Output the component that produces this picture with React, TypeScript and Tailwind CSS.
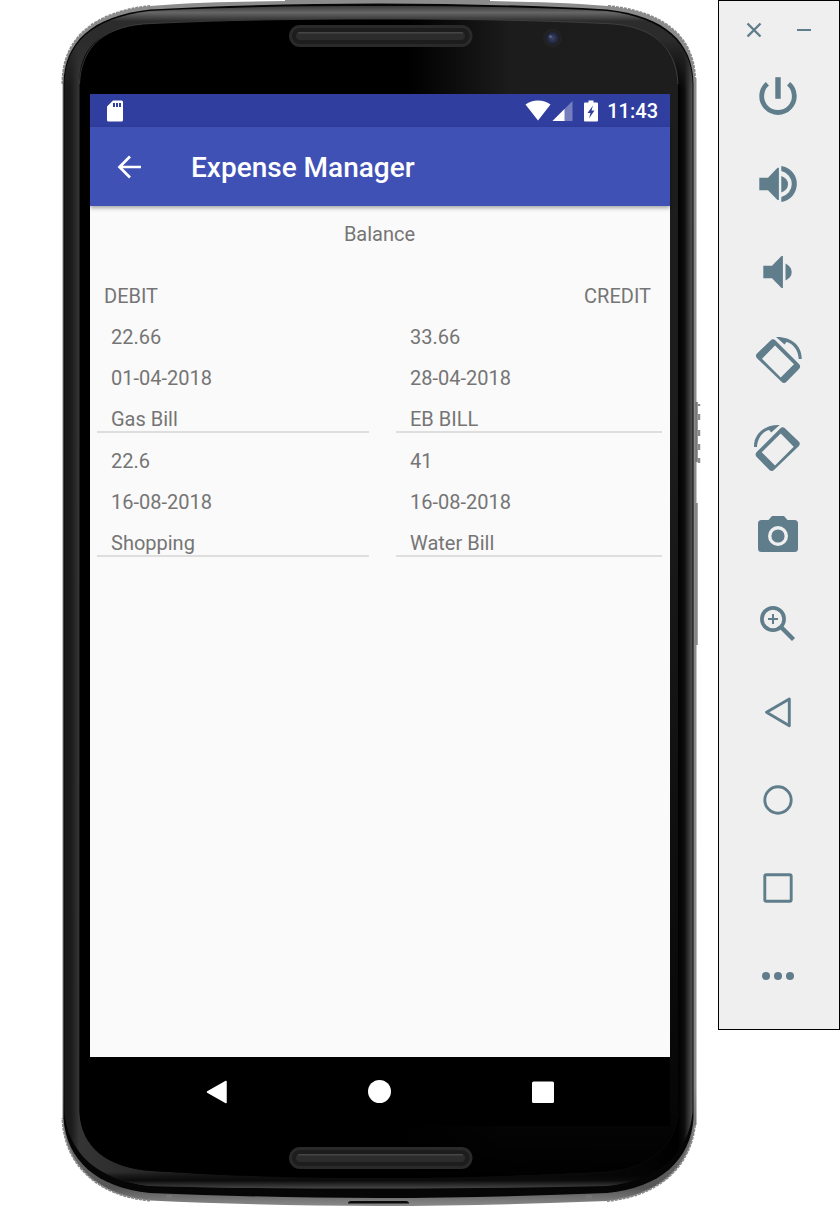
import React from "react";

type Entry = { amount: string; date: string; label: string };

const debits: Entry[] = [
  { amount: "22.66", date: "01-04-2018", label: "Gas Bill" },
  { amount: "22.6", date: "16-08-2018", label: "Shopping" },
];

const credits: Entry[] = [
  { amount: "33.66", date: "28-04-2018", label: "EB BILL" },
  { amount: "41", date: "16-08-2018", label: "Water Bill" },
];

const BODY =
  "M63.5 84 C64 42 92 16 150 9.5 C225 5 300 4 378.5 3.5 C457 4 532 5 607 9.5 C665 16 693 42 693.5 84 V1118 C691 1160 660 1188 607 1193 C530 1196 455 1198 378.5 1198 C302 1198 227 1196 150 1193 C97 1188 66 1160 63.5 1118 Z";
const SHELL =
  "M62.5 84 C62 40 92 12 150 6 C200 2 240 2 285 1 V0 H490 V1 C520 2 560 2 608 6 C668 12 694 40 695 78 H696.5 V1125 H695 C690 1168 658 1196 607 1201 C530 1204 455 1206 378.5 1206 C302 1206 227 1204 150 1200.5 C97 1196 64 1164 62.5 1118 Z";
const BEVEL =
  "M64.5 84 C65 44 92 18 150 11 C225 7 300 6 378.5 6 C457 6 532 7 607 11 C665 18 692 44 692.5 84 V1112 C689 1153 660 1180 607 1186 C530 1188 455 1188.500 378.5 1188.500 C302 1188.500 227 1188 150 1186 C97 1180 68 1153 64.5 1112 Z";
const FACE =
  "M79.5 78 C81 45 106 25 152 23.500 C225 20 300 19 378.5 19 C457 19 532 20 605 23.500 C651 25 676 45 678 78 V1112 C676 1146 651 1168 605 1172 C530 1176 455 1178 378.5 1178 C302 1178 227 1176 152 1171 C106 1168 81 1146 79.5 1112 Z";

function Grille({ y }: { y: number }) {
  return (
    <g>
      <rect x="289" y={y} width="183.5" height="22" rx="11" fill="#2a2a2a" />
      <rect x="292" y={y + 3} width="177.500" height="16" rx="8" fill="#1d1d1d" />
      <rect x="296" y={y + 7} width="169" height="8" rx="4" fill="#2c2c2c" />
      <rect x="298" y={y + 7} width="165" height="1.4" rx="0.7" fill="#464646" />
    </g>
  );
}

function DeviceFrame() {
  return (
    <svg
      className="absolute inset-0 h-full w-full"
      viewBox="62 0 636 1206"
      preserveAspectRatio="none"
      overflow="visible"
      aria-hidden="true"
    >
      <defs>
        <linearGradient id="shell" x1="0" y1="0" x2="0" y2="1">
          <stop offset="0" stopColor="#8c8c8c" />
          <stop offset="0.9" stopColor="#8a8a8a" />
          <stop offset="0.985" stopColor="#555" />
          <stop offset="1" stopColor="#8a8a8a" />
        </linearGradient>
        <linearGradient id="sides" gradientUnits="userSpaceOnUse" x1="64" y1="0" x2="693" y2="0">
          <stop offset="0" stopColor="#1a1a1a" />
          <stop offset="0.012" stopColor="#1c1c1c" />
          <stop offset="0.024" stopColor="#353535" />
          <stop offset="0.2" stopColor="#1e1e1e" />
          <stop offset="0.8" stopColor="#0c0c0c" />
          <stop offset="0.976" stopColor="#000" />
          <stop offset="0.986" stopColor="#0c0c0c" />
          <stop offset="1" stopColor="#5a5a5a" />
        </linearGradient>
        <linearGradient id="ridge" gradientUnits="userSpaceOnUse" x1="0" y1="4" x2="0" y2="90">
          <stop offset="0" stopColor="#2c2c2c" />
          <stop offset="0.1" stopColor="#666" />
          <stop offset="0.2" stopColor="#2c2c2c" />
          <stop offset="0.4" stopColor="#2c2c2c" />
          <stop offset="1" stopColor="#2c2c2c" stopOpacity="0" />
        </linearGradient>
        <linearGradient id="foot" gradientUnits="userSpaceOnUse" x1="0" y1="1172" x2="0" y2="1189">
          <stop offset="0" stopColor="#000" stopOpacity="0" />
          <stop offset="0.5" stopColor="#0c0c0c" />
          <stop offset="1" stopColor="#4a4a4a" />
        </linearGradient>
        <linearGradient id="glass" gradientUnits="userSpaceOnUse" x1="79" y1="0" x2="678" y2="0">
          <stop offset="0" stopColor="#000" />
          <stop offset="0.55" stopColor="#000" />
          <stop offset="0.72" stopColor="#1c1c1c" />
          <stop offset="1" stopColor="#1d1d1d" />
        </linearGradient>
        <linearGradient id="shade" gradientUnits="userSpaceOnUse" x1="0" y1="400" x2="0" y2="1180">
          <stop offset="0" stopColor="#000" stopOpacity="0" />
          <stop offset="0.9" stopColor="#000" stopOpacity="0.78" />
          <stop offset="1" stopColor="#000" />
        </linearGradient>
        <radialGradient id="lens">
          <stop offset="0" stopColor="#3c4668" />
          <stop offset="0.6" stopColor="#262c44" />
          <stop offset="1" stopColor="#1b1d26" />
        </radialGradient>
      </defs>
      <path d={SHELL} fill="url(#shell)" />
      <path
        d="M62.500 84 C62 40 92 12 150 6 M608 6 C668 12 694 40 695 78 M695 1125 C690 1168 658 1196 607 1201 M150 1200.500 C97 1196 64 1164 62.500 1118"
        fill="none"
        stroke="#8a8a8a"
        strokeWidth="2"
        strokeDasharray="3 1"
      />
      <path d={BODY} fill="#060606" />
      <path d={BEVEL} fill="url(#sides)" />
      <path d={BEVEL} fill="url(#ridge)" />
      <path d={BEVEL} fill="url(#foot)" />
      <path d={FACE} fill="url(#glass)" />
      <path d={FACE} fill="url(#shade)" />
      <path
        d="M79.500 84 C81 45 106 25 152 23.500 C225 20 300 19 378.500 19 C457 19 532 20 605 23.500 C651 25 676 45 678 84"
        fill="none"
        stroke="#444"
        strokeWidth="0.8"
      />
      <Grille y={25} />
      <Grille y={1147} />
      <circle cx="552.500" cy="38" r="9.500" fill="#222" />
      <circle cx="552.500" cy="38" r="7" fill="url(#lens)" />
      <circle cx="550.500" cy="36.500" r="1.600" fill="#52608c" />
      <path d="M348 1203.500 q0 -2.500 3 -2.500 H406 q3 0 3 2.500" fill="#0a0a0a" />
      <path d="M166 1195 h6 v5 h-6 z M586 1195 h6 v5 h-6 z" fill="#777" />
      <path d="M696.500 402 V462" stroke="#777" strokeWidth="2.500" />
      <path
        d="M699 404 V406 M699 414 V420 M699 430 V436 M699 444 V450 M699 458 V463"
        stroke="#8a8a8a"
        strokeWidth="2.500"
      />
      <path d="M696.500 503 V645" stroke="#858585" strokeWidth="2.500" />
    </svg>
  );
}

function StatusBar() {
  return (
    <div className="flex h-[33px] items-center bg-[#303f9f] pr-3 pl-4 text-white">
      <svg className="h-[22px] w-[18px]" viewBox="0 0 18 22" aria-label="SD card">
        <path
          fill="currentColor"
          fillRule="evenodd"
          d="M7 .500H15.500A1.500 1.500 0 0 1 17 2V20A1.500 1.500 0 0 1 15.500 21.500H2.500A1.500 1.500 0 0 1 1 20V6.500ZM7 3V7H9V3ZM10 3V7H12V3ZM13 3V7H15V3Z"
        />
      </svg>
      <div className="ml-auto flex items-center">
        <svg className="h-[22px] w-[26px]" viewBox="0 0 26 22" aria-label="Wi-Fi">
          <path fill="currentColor" d="M.500 4.500Q6 .500 13 .500T25.500 4.500L13 20.500Z" />
        </svg>
        <svg className="ml-px h-[22px] w-[21px]" viewBox="0 0 21 22" aria-label="Signal">
          <path fill="#757fc0" d="M.500 21 20.500 1V21Z" />
          <path fill="currentColor" d="M.500 21 12.500 9V21Z" />
        </svg>
        <svg className="ml-[11px] h-[22px] w-[14px]" viewBox="0 0 14 22" aria-label="Battery charging">
          <path
            fill="currentColor"
            fillRule="evenodd"
            d="M4.500 .500H9.500V2.500H13Q14 2.500 14 3.500V20.500Q14 21.500 13 21.500H1Q0 21.500 0 20.500V3.500Q0 2.500 1 2.500H4.500ZM9 5.500 3.500 13H6.500L5 18.500 10.500 10.500H7.500Z"
          />
        </svg>
        <time className="ml-[9px] text-[20px] leading-6 font-medium">11:43</time>
      </div>
    </div>
  );
}

function AppBar() {
  return (
    <header className="relative flex h-[79px] items-center gap-[50px] bg-[#3f51b5] pr-4 pl-[27px] text-white shadow-[0_2px_4px_rgba(0,0,0,0.35)]">
      <button type="button" aria-label="Navigate up">
        <svg className="h-6 w-6" viewBox="0 0 24 24">
          <path
            d="M24 12H3M13 1.500 2.500 12 13 22.500"
            fill="none"
            stroke="currentColor"
            strokeWidth="2.700"
          />
        </svg>
      </button>
      <h1 className="pt-[2px] text-[28px] leading-8 font-medium">Expense Manager</h1>
    </header>
  );
}

function EntryList({ name, entries }: { name: string; entries: Entry[] }) {
  return (
    <ul aria-label={name}>
      {entries.map((entry) => (
        <li
          key={entry.label}
          className="flex flex-col gap-[17px] border-b-2 border-[#dedede] pt-4 pl-[14px]"
        >
          <span>{entry.amount}</span>
          <span>{entry.date}</span>
          <span>{entry.label}</span>
        </li>
      ))}
    </ul>
  );
}

function NavBar() {
  return (
    <nav className="flex h-[69px] items-center justify-center gap-[139px] bg-black text-white">
      <button type="button" aria-label="Back">
        <svg className="h-6 w-6" viewBox="0 0 24 24">
          <path
            d="M2.500 12 21 1.500V22.500Z"
            fill="currentColor"
            stroke="currentColor"
            strokeWidth="1.500"
            strokeLinejoin="round"
          />
        </svg>
      </button>
      <button type="button" aria-label="Home">
        <svg className="h-6 w-6" viewBox="0 0 24 24">
          <circle cx="11.500" cy="11.500" r="11.500" fill="currentColor" />
        </svg>
      </button>
      <button type="button" aria-label="Overview">
        <svg className="h-6 w-6" viewBox="0 0 24 24">
          <rect x="1" y="1.500" width="22" height="21.500" rx="1.500" fill="currentColor" />
        </svg>
      </button>
    </nav>
  );
}

const ROTATE = (
  <>
    <path
      fill="currentColor"
      fillRule="evenodd"
      d="M16.500 4.500Q19 2 21.500 4.500L45 28Q47.300 30.500 45 33L32.500 45.800Q30 48.300 27.500 45.800L3 22.200Q.800 19.700 3 17.500ZM21 9.500 8 22.700 26.700 41.500 40 28.200Z"
    />
    <path
      fill="currentColor"
      d="M22 1C37 .500 48 9.500 47.700 23H44.700C44.300 14 39 7.500 32.500 6L30.500 8.500Z"
    />
  </>
);

const tools: { name: string; icon: React.ReactNode }[] = [
  {
    name: "Power",
    icon: (
      <>
        <path
          d="M13.400 11.800A16.300 16.300 0 1 0 34.600 11.800"
          fill="none"
          stroke="currentColor"
          strokeWidth="4.800"
        />
        <rect x="21.300" y="5.200" width="5.400" height="21.600" fill="currentColor" />
      </>
    ),
  },
  {
    name: "Volume up",
    icon: (
      <path
        fill="currentColor"
        d="M5.300 17.700H14L23.500 7.700H24.900V40H23.500L14 30.300H5.300ZM27.300 16Q34 18.500 34 24.200T27.300 32.400ZM27.300 6A18.200 18.200 0 0 1 27.300 42V37A13.300 13.300 0 0 0 27.300 11Z"
      />
    ),
  },
  {
    name: "Volume down",
    icon: (
      <path
        fill="currentColor"
        d="M9.300 17.700H18L27.500 8H28.900V40H27.500L18 30.300H9.300ZM31.500 15.500Q37.700 18.500 37.700 24T31.500 32.500Z"
      />
    ),
  },
  { name: "Rotate left", icon: ROTATE },
  { name: "Rotate right", icon: <g transform="translate(47.700 0) scale(-1 1)">{ROTATE}</g> },
  {
    name: "Take screenshot",
    icon: (
      <>
        <path
          fill="currentColor"
          d="M7.500 8H14.500L18 4H30L33.500 8H40.500Q44 8 44 11.500V36.500Q44 40 40.500 40H7.500Q4 40 4 36.500V11.500Q4 8 7.500 8Z"
        />
        <circle cx="24" cy="24" r="8.300" fill="none" stroke="#efefef" strokeWidth="3.400" />
      </>
    ),
  },
  {
    name: "Zoom",
    icon: (
      <g fill="none" stroke="currentColor">
        <circle cx="19" cy="19" r="11.100" strokeWidth="3.700" />
        <path d="M14 19H24M19 14V24" strokeWidth="2" />
        <path d="M27.500 27.500 39.500 39.500" strokeWidth="4.400" />
      </g>
    ),
  },
  {
    name: "Back",
    icon: (
      <path
        d="M12.500 24.300 35.300 11V37.700Z"
        fill="none"
        stroke="currentColor"
        strokeWidth="2.900"
        strokeLinejoin="round"
      />
    ),
  },
  {
    name: "Home",
    icon: <circle cx="24" cy="24" r="13.200" fill="none" stroke="currentColor" strokeWidth="2.900" />,
  },
  {
    name: "Overview",
    icon: (
      <rect
        x="10.800"
        y="10.800"
        width="26.400"
        height="26.400"
        rx="1.500"
        fill="none"
        stroke="currentColor"
        strokeWidth="2.900"
      />
    ),
  },
  {
    name: "More",
    icon: (
      <g fill="currentColor">
        <circle cx="12" cy="24" r="4" />
        <circle cx="24" cy="24" r="4" />
        <circle cx="36" cy="24" r="4" />
      </g>
    ),
  },
];

function Toolbar() {
  return (
    <aside className="w-[122px] shrink-0 border border-black bg-[#efefef] pb-[9px] text-[#607d8b]">
      <div className="flex h-[51px] items-center gap-[26px] pt-[7px] pl-[23px]">
        <button type="button" aria-label="Close">
          <svg className="h-6 w-6" viewBox="0 0 24 24">
            <path d="M5.500 5.500 18.500 18.500M18.500 5.500 5.500 18.500" stroke="currentColor" strokeWidth="2.400" />
          </svg>
        </button>
        <button type="button" aria-label="Minimize">
          <svg className="h-6 w-6" viewBox="0 0 24 24">
            <path d="M5 12H19" stroke="currentColor" strokeWidth="2" />
          </svg>
        </button>
      </div>
      <div className="flex flex-col pr-0.5">
        {tools.map((tool) => (
          <button
            key={tool.name}
            type="button"
            aria-label={tool.name}
            className="flex h-[88px] items-center justify-center"
          >
            <svg className="h-12 w-12" viewBox="0 0 48 48">
              {tool.icon}
            </svg>
          </button>
        ))}
      </div>
    </aside>
  );
}

export default function App() {
  return (
    <div className="flex min-h-screen items-start bg-white pl-[62px] font-[Roboto,sans-serif]">
      <main className="relative mr-5 min-w-0 flex-1 px-7 pt-[94px] pb-20">
        <DeviceFrame />
        <div className="relative flex flex-col">
          <StatusBar />
          <AppBar />
          <section className="min-h-[851px] bg-[#fafafa] pt-4 pr-2 pl-[7px] text-[20px] leading-6 text-[#757575]">
            <h2 className="text-center">Balance</h2>
            <div className="mt-[38px] mb-px flex justify-between pr-[11px] pl-[7px]">
              <h3>DEBIT</h3>
              <h3>CREDIT</h3>
            </div>
            <div className="grid grid-cols-[272fr_266fr] gap-[27px]">
              <EntryList name="Debit" entries={debits} />
              <EntryList name="Credit" entries={credits} />
            </div>
          </section>
          <NavBar />
        </div>
      </main>
      <Toolbar />
    </div>
  );
}
